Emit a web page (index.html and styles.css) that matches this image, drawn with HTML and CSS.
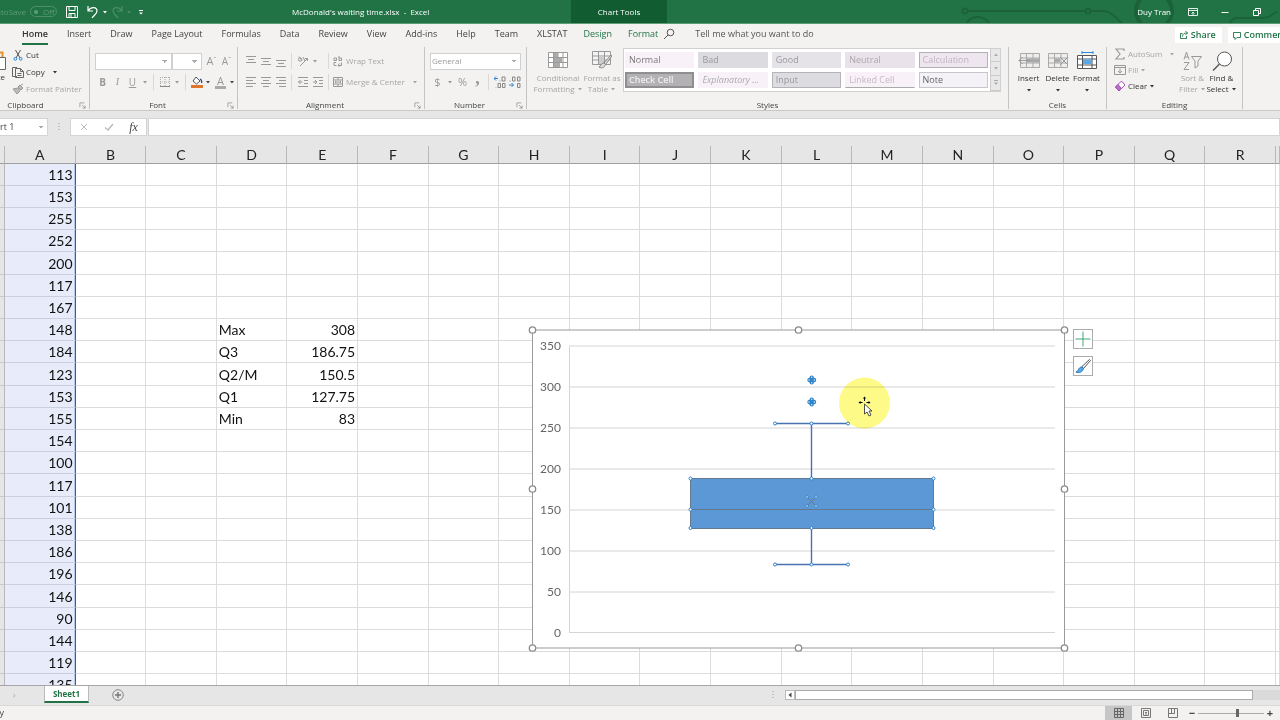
FILE: index.html
```html
<!DOCTYPE html>
<html lang="en">
<head>
<meta charset="utf-8">
<title>McDonald's waiting time.xlsx - Excel</title>
<link rel="stylesheet" href="styles.css">
</head>
<body>
<svg class="defs" aria-hidden="true">
  <symbol id="caret" viewBox="0 0 6 4"><path d="M1 1h4L3 3.4z" fill="currentColor"/></symbol>
  <symbol id="launch" viewBox="0 0 8 8"><path d="M1 6V1h5M3.5 3.5 7 7M7 4v3H4" fill="none" stroke="currentColor" stroke-width=".8"/></symbol>
  <symbol id="al-top" viewBox="0 0 12 12"><path d="M1 1.5h10M3 4.5h6M1 7.500h10" fill="none" stroke="currentColor"/></symbol>
  <symbol id="al-mid" viewBox="0 0 12 12"><path d="M1 3.5h10M3 6.5h6M1 9.5h10" fill="none" stroke="currentColor"/></symbol>
  <symbol id="al-bot" viewBox="0 0 12 12"><path d="M1 5.500h10M3 8.500h6M1 11.500h10" fill="none" stroke="currentColor"/></symbol>
  <symbol id="al-l" viewBox="0 0 12 12"><path d="M1 1.5h10M1 4.5h7M1 7.500h10M1 10.500h7" fill="none" stroke="currentColor"/></symbol>
  <symbol id="al-c" viewBox="0 0 12 12"><path d="M1 1.5h10M3 4.5h6M1 7.500h10M3 10.500h6" fill="none" stroke="currentColor"/></symbol>
  <symbol id="al-r" viewBox="0 0 12 12"><path d="M1 1.5h10M4 4.5h7M1 7.500h10M4 10.500h7" fill="none" stroke="currentColor"/></symbol>
  <symbol id="out" viewBox="0 0 12 12"><path d="M1 1.5h10M7 4.5h4M7 7.500h4M1 10.500h10M5.500 6h-4M3.500 4 1.500 6l2 2" fill="none" stroke="currentColor"/></symbol>
  <symbol id="in" viewBox="0 0 12 12"><path d="M1 1.5h10M7 4.5h4M7 7.500h4M1 10.500h10M1 6h4M3 4l2 2-2 2" fill="none" stroke="currentColor"/></symbol>
</svg>

<header class="titlebar">
  <svg class="circuit" viewBox="0 0 320 23" aria-hidden="true"><g fill="none" stroke="#1b623a" stroke-width="2"><circle cx="5" cy="11" r="2.500"/><path d="M8 11h117"/><circle cx="128" cy="11" r="2.500"/><path d="M131 11h13c8 0 12 8 18 12M7 23c4-8 16-8 22 0"/><circle cx="194" cy="11" r="18" stroke-width="4"/><path d="M270 23c3-6 6-5 12-5h22c8 0 8-6 14-6"/></g></svg>
  <div class="autosave">AutoSave</div>
  <button class="toggle"><span class="knob"></span>Off</button>
  <button class="qa save" aria-label="Save"><svg viewBox="0 0 14 14"><path d="M1.500 1.500h11v11h-11zM4 1.500v4h6v-4M4 12.500v-4h6v4M6 9v3" fill="none" stroke="#fff"/></svg></button>
  <button class="qa" aria-label="Undo"><svg viewBox="0 0 14 14"><path d="M2 1v5h5M2 6c3-5 9-4 9 0 0 3-3 4-5 7" fill="none" stroke="#fff" stroke-width="1.200"/></svg></button>
  <svg class="caret"><use href="#caret"/></svg>
  <button class="qa dim" aria-label="Redo"><svg viewBox="0 0 14 14"><path d="M12 1v5H7M12 6C9 1 3 2 3 6c0 3 3 4 5 7" fill="none" stroke="currentColor" stroke-width="1.200"/></svg></button>
  <svg class="caret dim"><use href="#caret"/></svg>
  <button class="qa" aria-label="Customize toolbar"><svg viewBox="0 0 14 14"><path d="M5 5.500h4" stroke="#fff"/><path d="M5 7.500h4L7 9.500z" fill="#fff"/></svg></button>
  <div class="doc">McDonald's waiting time.xlsx &nbsp;-&nbsp; Excel</div>
  <div class="context">Chart Tools</div>
  <div class="account">
    <span class="user">Duy Tran</span>
    <button class="win" aria-label="Ribbon display"><svg viewBox="0 0 12 12"><path d="M1.500 2.500h9v7h-9zM1.500 4.500h9M6 9V6M4.500 7.500 6 6l1.500 1.500" fill="none" stroke="#e3efe8"/></svg></button>
    <button class="win" aria-label="Minimize"><svg viewBox="0 0 12 12"><path d="M2.500 6.500h7" stroke="#fff"/></svg></button>
    <button class="win" aria-label="Restore"><svg viewBox="0 0 12 12"><path d="M2.500 4.500h5v5h-5zM4.500 4V2.500h5v5H8" fill="none" stroke="#fff"/></svg></button>
  </div>
</header>

<nav class="tabs">
  <button class="tab on">Home</button><button class="tab">Insert</button><button class="tab">Draw</button><button class="tab">Page Layout</button><button class="tab">Formulas</button><button class="tab">Data</button><button class="tab">Review</button><button class="tab">View</button><button class="tab">Add-ins</button><button class="tab">Help</button><button class="tab">Team</button><button class="tab">XLSTAT</button><button class="tab green">Design</button><button class="tab green">Format</button>
  <button class="tab tell"><svg viewBox="0 0 12 12"><circle cx="7.500" cy="4.500" r="3.300" fill="none" stroke="currentColor"/><path d="M5 7 1 11" stroke="currentColor"/></svg>Tell me what you want to do</button>
  <div class="share">
    <button class="white"><svg viewBox="0 0 10 10"><path d="M3.500 3.500H1.500v5h6V6M3.500 6.500c0-3 2-3.500 5-3.500M6.500 1l2 2-2 2" fill="none" stroke="currentColor" stroke-width=".9"/></svg>Share</button>
    <button class="white comments"><svg viewBox="0 0 10 10"><path d="M1.500 2.500h7v5H5l-2 2v-2H1.500z" fill="none" stroke="currentColor" stroke-width=".9"/></svg>Comments</button>
  </div>
</nav>

<main class="ribbon">
  <section class="group clipboard">
    <div class="body">
      <button class="paste"><svg viewBox="0 0 8 20"><path d="M0 1.500h2.500V6" fill="none" stroke="#e8912c" stroke-width="2"/><path d="M-1 6.500h6.500v12H-1z" fill="#fff" stroke="#666"/></svg><span>te</span></button>
      <div class="stack">
        <button class="cmd"><svg viewBox="0 0 12 12"><path d="M3.500 1 8 9M8.500 1 4 9" stroke="#555" fill="none"/><circle cx="3.300" cy="9.800" r="1.400" fill="none" stroke="#2b88d8"/><circle cx="8.700" cy="9.800" r="1.400" fill="none" stroke="#2b88d8"/></svg>Cut</button>
        <button class="cmd"><svg viewBox="0 0 12 12"><path d="M5 10.500H.500v-9H5M3.500 2.500h5l3 3v6h-8zM8.500 2.500v3h3M5.500 7.500h4M5.500 9.500h4" fill="none" stroke="#666"/></svg>Copy<svg class="caret far"><use href="#caret"/></svg></button>
        <button class="cmd off"><svg viewBox="0 0 12 12"><path d="M1 6l5-1 2 3-3 3zM6 4l2-2 3 3-2 2zM9 2l2-1" fill="#bbb" stroke="#999"/></svg>Format Painter</button>
      </div>
    </div>
    <footer>Clipboard<svg class="launch"><use href="#launch"/></svg></footer>
  </section>

  <section class="group font">
    <div class="body col">
      <div class="line"><select class="combo name" aria-label="Font name"><option></option></select><select class="combo size" aria-label="Font size"><option></option></select><button class="ic big">A<sup>ˆ</sup></button><button class="ic mid">A<sup>ˇ</sup></button></div>
      <div class="line">
        <button class="ic mid"><b>B</b></button><button class="ic mid"><i class="serif">I</i></button><button class="ic mid"><u>U</u></button><svg class="caret"><use href="#caret"/></svg><i class="sep"></i>
        <button class="ic" aria-label="Borders"><svg viewBox="0 0 12 12"><path d="M1.500 1v9M6 1v9M10.500 1v9M1 1.500h10M1 6h10" stroke="#aaa" stroke-dasharray="1 1" fill="none"/><path d="M1 10.500h10" stroke="#888"/></svg></button><svg class="caret"><use href="#caret"/></svg><i class="sep"></i>
        <button class="ic" aria-label="Fill color"><svg viewBox="0 0 12 12"><path d="M5 1 9 5 5.500 8 2 5z" fill="#fff" stroke="#555"/><path d="M9 3c2 1 2 2 1.500 4" fill="none" stroke="#2a4f86" stroke-width="1.300"/><path d="M0 9h12v3H0z" fill="#e0762c"/></svg></button><svg class="caret dark"><use href="#caret"/></svg>
        <button class="ic under" aria-label="Font color">A</button><svg class="caret dark"><use href="#caret"/></svg>
      </div>
    </div>
    <footer>Font<svg class="launch"><use href="#launch"/></svg></footer>
  </section>

  <section class="group align">
    <div class="body col">
      <div class="line"><button class="ic"><svg><use href="#al-top"/></svg></button><button class="ic"><svg><use href="#al-mid"/></svg></button><button class="ic"><svg><use href="#al-bot"/></svg></button><i class="sep"></i><button class="ic" aria-label="Orientation"><svg viewBox="0 0 12 12"><circle cx="3" cy="4.500" r="1.700" fill="none" stroke="#999"/><path d="M2 1.500l3 4M6 2l2 4M3 11l7.500-7.500M8 3.500h2.500V6" fill="none" stroke="#999"/></svg></button><svg class="caret"><use href="#caret"/></svg><i class="sep wide"></i><button class="cmd off"><svg viewBox="0 0 12 12"><path d="M2 5V3h2.500v2.500H2zM7 1v4.500h2.500V3H7M4 7.500H2v3h2.500M9.500 7.500v3H6M7.500 8.500 6 10.500l1.500 1" fill="none" stroke="#999"/></svg>Wrap Text</button></div>
      <div class="line"><button class="ic"><svg><use href="#al-l"/></svg></button><button class="ic"><svg><use href="#al-c"/></svg></button><button class="ic"><svg><use href="#al-r"/></svg></button><i class="sep"></i><button class="ic"><svg><use href="#out"/></svg></button><button class="ic"><svg><use href="#in"/></svg></button><i class="sep"></i><button class="cmd off"><svg viewBox="0 0 12 12"><path d="M1.500 1.500h9v9h-9zM1.500 4h9M1.500 8h9M6 1.500V4M6 8v2.500M3 6h6M4 5 3 6l1 1M8 5l1 1-1 1" fill="none" stroke="#999"/></svg>Merge &amp; Center<svg class="caret far"><use href="#caret"/></svg></button></div>
    </div>
    <footer>Alignment<svg class="launch"><use href="#launch"/></svg></footer>
  </section>

  <section class="group number">
    <div class="body col">
      <div class="line"><select class="combo full" aria-label="Number format"><option>General</option></select></div>
      <div class="line"><button class="ic big">$</button><svg class="caret"><use href="#caret"/></svg><button class="ic big">%</button><button class="ic comma">,</button><i class="sep"></i><button class="ic" aria-label="Increase decimal"><svg viewBox="0 0 12 12"><path d="M0 2.500h4M2 .500l-2 2 2 2" fill="none" stroke="#2b88d8"/><path d="M6 4.500v1M8 1h3v4H8zM2 11v.500M4 7.500h2.500v4H4zM8.500 7.500H11v4H8.500z" fill="none" stroke="#888"/></svg></button><button class="ic" aria-label="Decrease decimal"><svg viewBox="0 0 12 12"><path d="M0 9h4.500M2.500 7l2 2-2 2" fill="none" stroke="#2b88d8"/><path d="M1 4.500v1M3.500 1H6v4H3.500zM8.500 1H11v4H8.500zM8.500 7.500H11v4H8.500z" fill="none" stroke="#888"/></svg></button></div>
    </div>
    <footer>Number<svg class="launch"><use href="#launch"/></svg></footer>
  </section>

  <section class="group styles">
    <div class="body">
      <button class="large off cond"><svg viewBox="0 0 20 16"><path d="M.500.500h19v15H.500zM.500 5.500h19M.500 10.500h19M5.500 0v16M15 0v16M10 0v16" fill="#fff" stroke="#999"/><path d="M6 1h4v4H6zM6 6h8v4H6zM6 11h6v4H6z" fill="#aaa"/></svg>Conditional<span>Formatting <svg class="caret"><use href="#caret"/></svg></span></button>
      <button class="large off"><svg viewBox="0 0 20 18"><path d="M.500.500h18v13H.500zM.500 5h18M.500 9h18M6.500 0v14M12.500 0v14" fill="#f4f4f4" stroke="#999"/><path d="M7 5h5v8H7z" fill="#ccc"/><path d="M19 4l-7 8 1.500 1.500L20 5zM12 12c-3 0-3 3-5 4 3 2 6 0 6.500-2.500z" fill="#ddd" stroke="#888"/></svg>Format as<span>Table <svg class="caret"><use href="#caret"/></svg></span></button>
      <div class="gallery">
        <div class="swatches">
          <button class="sw pale">Normal</button><button class="sw g1">Bad</button><button class="sw g2">Good</button><button class="sw g3">Neutral</button><button class="sw calc">Calculation</button>
          <button class="sw check">Check Cell</button><button class="sw pale ital">Explanatory ...</button><button class="sw input">Input</button><button class="sw pale linked">Linked Cell</button><button class="sw note">Note</button>
        </div>
        <div class="scroller"><button aria-label="Up"><svg class="caret flip"><use href="#caret"/></svg></button><button aria-label="Down"><svg class="caret"><use href="#caret"/></svg></button><button aria-label="More"><svg viewBox="0 0 6 6" class="more"><path d="M1 .500h4" stroke="currentColor"/><path d="M1 2.500h4L3 5z" fill="currentColor"/></svg></button></div>
      </div>
    </div>
    <footer>Styles</footer>
  </section>

  <section class="group cells">
    <div class="body">
      <button class="large"><svg viewBox="0 0 22 18"><path d="M2.500 2.500h19v14h-19zM2.500 7h19M2.500 12h19M8.500 2v15M15 2v15" fill="#eee" stroke="#aaa"/><path d="M9 7.500h12v4H9z" fill="#aaa"/><path d="M12 9.500H1M4.500 6 1 9.500 4.500 13" fill="none" stroke="#999"/></svg>Insert<svg class="caret"><use href="#caret"/></svg></button>
      <button class="large"><svg viewBox="0 0 22 18"><path d="M1.500 2.500h19v14h-19zM1.500 7h19M1.500 12h19M7.500 2v15M14 2v15" fill="#eee" stroke="#aaa"/><path d="M7 7.500h6v4H7z" fill="#aaa"/><path d="M13 6l8 8M21 6l-8 8" fill="none" stroke="#999"/></svg>Delete<svg class="caret"><use href="#caret"/></svg></button>
      <button class="large"><svg viewBox="0 0 22 18"><path d="M1.500 4.500h19v13h-19zM1.500 8h19M1.500 14h19M6.500 4v14M16 4v14" fill="#fff" stroke="#555"/><path d="M7 8.500h9V13H7z" fill="#5aa9e6"/><path d="M6 1.500h11M6 0v3M17 0v3" stroke="#2b88d8"/></svg>Format<svg class="caret"><use href="#caret"/></svg></button>
    </div>
    <footer>Cells</footer>
  </section>

  <section class="group editing">
    <div class="body">
      <div class="stack">
        <button class="cmd off"><svg viewBox="0 0 12 12"><path d="M10 3V1H2l4 5-4 5h8V9" fill="none" stroke="#999" stroke-width="1.200"/></svg>AutoSum<svg class="caret far"><use href="#caret"/></svg></button>
        <button class="cmd off"><svg viewBox="0 0 12 12"><path d="M.500 1.500h11v9H.500zM.500 3.500h11M6 4.500V9M4 7l2 2 2-2" fill="none" stroke="#999"/></svg>Fill<svg class="caret"><use href="#caret"/></svg></button>
        <button class="cmd"><svg viewBox="0 0 12 12"><path d="M7.500 1 11 5 5 11 1.500 7z" fill="#fff" stroke="#a34fb5"/><path d="M4 4.500 7.500 8.500 5 11 1.500 7z" fill="#b870c6" stroke="#a34fb5"/></svg>Clear<svg class="caret"><use href="#caret"/></svg></button>
      </div>
      <button class="large off sort"><svg viewBox="0 0 22 20"><path d="M2 8.500 4.500 1 7 8.500M3 6h3M2 11.500h5L2 18.500h5" fill="none" stroke="#999"/><path d="M9.500 5.500h10L16 10v5l-3 2v-7z" fill="none" stroke="#999"/></svg>Sort &amp;<span>Filter <svg class="caret"><use href="#caret"/></svg></span></button>
      <button class="large"><svg viewBox="0 0 22 20"><circle cx="13.500" cy="8" r="7" fill="#fff" stroke="#555"/><path d="M8.500 13 2 19.500" stroke="#555" stroke-width="1.400"/></svg>Find &amp;<span>Select <svg class="caret"><use href="#caret"/></svg></span></button>
    </div>
    <footer>Editing</footer>
  </section>
</main>

<div class="formula">
  <select class="namebox" aria-label="Name box"><option>rt 1</option></select>
  <svg class="dots" viewBox="0 0 4 10"><path d="M2 1v8" stroke="#999" stroke-dasharray="1 2"/></svg>
  <div class="fx"><button aria-label="Cancel"><svg viewBox="0 0 10 10"><path d="M2 2l6 6M8 2 2 8" stroke="#bbb"/></svg></button><button aria-label="Enter"><svg viewBox="0 0 10 10"><path d="M1 5.500 4 8l5-6" fill="none" stroke="#bbb" stroke-width="1.400"/></svg></button><button class="serif"><i>fx</i></button></div>
  <input class="expr" aria-label="Formula">
</div>

<div class="sheet">
  <table class="grid" id="grid"></table>
  <svg class="chart" viewBox="0 0 548 334" role="img" aria-label="Box plot of waiting time">
    <rect x="8.500" y="8" width="532" height="318" fill="#fff" stroke="#999"/>
    <g stroke="#d4d4d4" fill="none"><path d="M45 24h486M45 65h486M45 106h486M45 147h486M45 188h486M45 229h486M45 270h486M45 310.500h486M45.500 24v286"/></g>
    <g class="axis"><text x="37" y="28">350</text><text x="37" y="69">300</text><text x="37" y="110">250</text><text x="37" y="151">200</text><text x="37" y="192">150</text><text x="37" y="233">100</text><text x="37" y="274">50</text><text x="37" y="315">0</text></g>
    <g fill="none" stroke="#4772ad" stroke-width="1.400"><path d="M251 101.500h73M287.500 101v56M287.500 206v37M251 242.500h73"/></g>
    <rect x="166.500" y="156.500" width="243" height="50" fill="#5b98d5" stroke="#66788c"/>
    <path d="M166 187.500h243" stroke="#66788c"/>
    <path d="M284 176l7 7M291 176l-7 7" stroke="#66788c"/>
    <g fill="#fff" stroke="#2f83c8"><circle cx="251" cy="101.500" r="1.500"/><circle cx="287.500" cy="101.500" r="1.500"/><circle cx="324" cy="101.500" r="1.500"/><circle cx="287.500" cy="156.500" r="1.500"/><circle cx="166.500" cy="156.500" r="1.500"/><circle cx="409.500" cy="156.500" r="1.500"/><circle cx="166.500" cy="187.500" r="1.500"/><circle cx="409.500" cy="187.500" r="1.500"/><circle cx="166.500" cy="206" r="1.500"/><circle cx="409.500" cy="206" r="1.500"/><circle cx="287.500" cy="206" r="1.500"/><circle cx="251" cy="242.500" r="1.500"/><circle cx="287.500" cy="242.500" r="1.500"/><circle cx="324" cy="242.500" r="1.500"/><circle cx="283" cy="175" r="1.300"/><circle cx="292" cy="175" r="1.300"/><circle cx="283" cy="184" r="1.300"/><circle cx="292" cy="184" r="1.300"/></g>
    <g fill="#2f83c8"><circle cx="285.500" cy="58" r="2.200"/><circle cx="290" cy="58" r="2.200"/><circle cx="287.700" cy="55.700" r="2.200"/><circle cx="287.700" cy="60.300" r="2.200"/><circle cx="285.500" cy="80" r="2.200"/><circle cx="290" cy="80" r="2.200"/><circle cx="287.700" cy="77.700" r="2.200"/><circle cx="287.700" cy="82.300" r="2.200"/></g>
    <g fill="#cfe6fa"><circle cx="285" cy="58" r=".8"/><circle cx="290.300" cy="58" r=".8"/><circle cx="287.700" cy="55.300" r=".8"/><circle cx="287.700" cy="60.700" r=".8"/><circle cx="285" cy="80" r=".8"/><circle cx="290.300" cy="80" r=".8"/><circle cx="287.700" cy="77.300" r=".8"/><circle cx="287.700" cy="82.700" r=".8"/></g>
    <circle class="spot" cx="340.500" cy="81" r="25.500"/>
    <path d="M335.500 80.500h3M342.500 80.500h3M340.500 76v3" stroke="#000"/><path d="M334.500 80.500l2-1.600v3.200zM346.500 80.500l-2-1.600v3.200zM340.500 74.500l-1.600 2h3.200z"/>
    <path d="M340.500 82v10l2.500-2 2 4 2-1-2-4h3z" fill="#fff" stroke="#222" stroke-width=".8"/>
    <g fill="#fff" stroke="#8a8a8a" stroke-width="1.300"><circle cx="8.500" cy="8" r="3.200"/><circle cx="274.500" cy="8" r="3.200"/><circle cx="540.500" cy="8" r="3.200"/><circle cx="8.500" cy="167" r="3.200"/><circle cx="540.500" cy="167" r="3.200"/><circle cx="8.500" cy="326" r="3.200"/><circle cx="274.500" cy="326" r="3.200"/><circle cx="540.500" cy="326" r="3.200"/></g>
  </svg>
  <div class="chart-tools">
    <button aria-label="Chart elements"><svg viewBox="0 0 18 18"><path d="M9 1.500v15M1.500 9h15" stroke="#3fa878"/></svg></button>
    <button aria-label="Chart styles"><svg viewBox="0 0 18 18"><path d="M15.500 2.500 8 9.500l1.500 2 7-8z" fill="#fff" stroke="#555"/><path d="M8 10c-4 0-3 4-6 5 3 1.500 7 0 7.500-3.500z" fill="#5aa9e6" stroke="#2f78b7"/></svg></button>
  </div>
</div>

<div class="sheetbar">
  <span class="nav">›</span>
  <button class="sheettab">Sheet1</button>
  <button class="add" aria-label="New sheet"><svg viewBox="0 0 12 12"><circle cx="6" cy="6" r="5.300" fill="none" stroke="#8a8a8a"/><path d="M6 3v6M3 6h6" stroke="#777" stroke-width="1.400"/></svg></button>
  <svg class="dots" viewBox="0 0 4 10"><path d="M2 1v8" stroke="#999" stroke-dasharray="1 2"/></svg>
  <div class="hscroll"><button class="arrow" aria-label="Scroll left"><svg viewBox="0 0 8 8"><path d="M5.500 1.500v5L2.500 4z" fill="#444"/></svg></button><div class="thumb"></div></div>
</div>
<footer class="status">
  <span class="ready">y</span>
  <button class="view on" aria-label="Normal"><svg viewBox="0 0 10 10"><path d="M.500.500h9v9h-9zM.500 3.500h9M.500 6.500h9M3.500.500v9M6.500.500v9" fill="none" stroke="#666"/></svg></button>
  <button class="view" aria-label="Page layout"><svg viewBox="0 0 10 10"><path d="M.500.500h9v9h-9zM2.500 2.500h5v5h-5zM4 4.500h2M4 6h2" fill="none" stroke="#777"/></svg></button>
  <button class="view" aria-label="Page break"><svg viewBox="0 0 10 10"><path d="M.500.500h9v9h-9zM3.500.500v5M6.500.500v5M.500 5.500h6" fill="none" stroke="#777"/></svg></button>
  <button class="zoom" aria-label="Zoom out">−</button><input class="slider" type="range" min="0" max="100" value="60" aria-label="Zoom"><button class="zoom" aria-label="Zoom in">+</button>
</footer>
<script src="grid.js"></script>
</body>
</html>
```
FILE: grid.js
```js
const letters = "ABCDEFGHIJKLMNOPQR".split("");
const times = [113, 153, 255, 252, 200, 117, 167, 148, 184, 123, 153, 155, 154, 100, 117, 101, 138, 186, 196, 146, 90, 144, 119, 135];
const summary = { 7: ["Max", "308"], 8: ["Q3", "186.75"], 9: ["Q2/M", "150.5"], 10: ["Q1", "127.75"], 11: ["Min", "83"] };

let html = '<colgroup><col class="edge">' + letters.map(() => "<col>").join("") + '<col class="tail"></colgroup><thead><tr><th class="corner"></th>' +
  letters.map(l => `<th>${l}</th>`).join("") + "<th></th></tr></thead><tbody>";
times.forEach((t, r) => {
  html += '<tr><th></th>' + letters.map((l, c) => {
    if (c === 0) return `<td class="sel num">${t}</td>`;
    if (summary[r] && c === 3) return `<td>${summary[r][0]}</td>`;
    if (summary[r] && c === 4) return `<td class="num">${summary[r][1]}</td>`;
    return "<td></td>";
  }).join("") + "<td></td></tr>";
});
document.getElementById("grid").innerHTML = html + "</tbody>";
```
FILE: styles.css
```css
* { box-sizing: border-box; }
body { margin: 0; height: 100vh; display: flex; flex-direction: column; overflow: hidden; background: #e6e6e6; font-family: "Open Sans", "Noto Sans", sans-serif; font-size: 9px; line-height: 12px; color: #444; }
button, input, select { font: inherit; color: inherit; border: 0; margin: 0; padding: 0; background: none; border-radius: 0; white-space: nowrap; }
select { appearance: none; }
svg { display: block; flex: none; }
.defs { display: none; }
.caret { width: 6px; height: 4px; }
.serif { font-family: "Liberation Serif", serif; }

.titlebar { position: relative; flex: none; height: 24px; display: flex; align-items: center; background: #217346; color: #fff; border-bottom: 1px solid #5d9c79; font-size: 8px; }
.circuit { position: absolute; right: 0; top: 0; width: 320px; height: 23px; }
.autosave { width: 26px; display: flex; justify-content: flex-end; color: #5f9c7a; overflow: hidden; }
.toggle { width: 27px; height: 11px; margin-left: 4px; border: 1px solid #4e8f6c; border-radius: 6px; color: #5f9c7a; line-height: 9px; display: flex; align-items: center; gap: 5px; padding-left: 3px; }
.knob { width: 4px; height: 4px; border-radius: 2px; background: #5f9c7a; }
.qa svg { width: 14px; height: 14px; }
.save { margin: 0 7px 0 8px; }
.qa + .caret { margin: 0 2px; }
.dim { color: #4c8e6a; }
.doc { flex: 1; padding-left: 144px; }
.context { width: 96px; margin-right: 613px; align-self: stretch; display: grid; place-items: center; background: #115c31; }
.doc, .context { white-space: nowrap; }
.account { position: absolute; right: 7px; top: 0; height: 23px; display: flex; align-items: center; }
.user { margin-right: 6px; }
.win { width: 32px; display: grid; place-items: center; }
.win svg { width: 12px; height: 12px; }

.tabs { flex: none; height: 22px; display: flex; align-items: center; gap: 19px; padding-left: 22px; background: #f3f2f1; overflow: hidden; }
.tab { height: 19px; border-bottom: 2px solid transparent; }
.tab.on { font-weight: 600; color: #333; border-color: #217346; }
.tab.green { margin-left: -3px; }
.green { color: #217346; }
.tell { display: flex; align-items: center; gap: 20px; margin-left: -14px; color: #555; }
.tell svg { width: 12px; height: 12px; }
.share { margin-left: auto; margin-right: -17px; display: flex; gap: 6px; font-weight: 600; color: #217346; }
.white { height: 16px; padding: 0 6px 0 4px; background: #fff; display: flex; align-items: center; gap: 2px; }
.white svg { width: 10px; height: 10px; }

.ribbon { flex: none; height: 65px; display: flex; padding-right: 37px; background: #f3f2f1; border-bottom: 1px solid #c8c8c8; font-size: 8px; }
.group { display: flex; flex-direction: column; height: 62px; margin-top: 1px; border-right: 1px solid #c4c4c4; color: #333; }
.body { flex: 1; display: flex; min-height: 0; }
.group footer { position: relative; height: 12px; line-height: 16px; text-align: center; color: #444; }
.launch { position: absolute; right: 3px; top: 5px; width: 7px; height: 7px; color: #888; }
.clipboard { width: 90px; }
.clipboard footer { padding-right: 38px; }
.font { width: 148px; }
.font footer { padding-right: 12px; }
.align { width: 187px; }
.align footer { padding-right: 12px; }
.number { width: 102px; }
.number footer { padding-right: 12px; }
.styles { flex: 1; }
.cells { width: 98px; }
.editing { width: 136px; }

.paste { width: 8px; padding-top: 4px; display: flex; flex-direction: column; align-items: flex-end; overflow: hidden; }
.paste svg { width: 8px; height: 20px; }
.paste span { padding-right: 3px; }
.stack { display: flex; flex-direction: column; gap: 4px; }
.clipboard .stack { padding: 2px 0 0 4px; gap: 5px; }
.cmd { height: 12px; display: flex; align-items: center; gap: 2px; }
.cmd svg { width: 12px; height: 12px; }
.cmd .caret { width: 6px; height: 4px; }
.cmd .far { margin-left: 5px; }
.off { color: #a6a6a6; }

.col { flex-direction: column; gap: 3px; padding: 5px 0 0 5px; }
.line { height: 18px; display: flex; align-items: center; }
.combo, .namebox { background: linear-gradient(45deg, transparent 50%, #aaa 50%) no-repeat right 6px center / 3px 3px, linear-gradient(-45deg, transparent 50%, #aaa 50%) no-repeat right 3px center / 3px 3px, #fff; }
.combo { height: 17px; border: 1px solid #d0d0d0; color: #999; }
.name { width: 77px; }
.size { width: 30px; margin-right: 2px; }
.full { width: 91px; padding-left: 1px; }
.ic { width: 15px; height: 16px; display: grid; place-items: center; color: #999; }
.line .ic:has(sup) { display: block; }
.ic svg { width: 12px; height: 12px; }
.ic sup { font-size: 8px; line-height: 0; vertical-align: 3px; }
.big { font-size: 11px; }
.mid { font-size: 10px; }
.comma { font: 700 18px/8px "Liberation Serif", serif; padding-bottom: 8px; }
.under { font-size: 11px; line-height: 10px; height: 13px; border-bottom: 3px solid #aaa; width: 11px; margin: 0 2px; }
.line > .caret { color: #999; margin: 0 2px; }
.line > .dark { color: #444; margin: 0 2px 0 1px; }
.sep { width: 1px; height: 16px; margin: 0 3px; background: #d8d8d8; }
.sep.wide { margin: 0 3px 0 8px; }

.large { display: flex; flex-direction: column; align-items: center; padding-top: 4px; width: 29px; }
.large > svg { width: 20px; height: 18px; margin-bottom: 3px; }
.large > .caret { width: 6px; height: 4px; margin-top: 4px; }
.large span { display: flex; align-items: center; gap: 2px; line-height: 10px; }
.styles .body { padding-left: 6px; }
.styles .large { width: 38px; }
.styles .cond { width: 50px; }
.gallery { flex: 1; height: 44px; margin: 1px 7px 0 2px; display: flex; border: 1px solid #d0d0d0; background: #fff; font-size: 9px; }
.swatches { flex: 1; display: grid; grid-template-columns: repeat(5, 1fr); gap: 4px; padding: 3px 2px 3px 1px; }
.sw { text-align: left; padding-left: 3px; border: 1px solid transparent; color: #aaa; line-height: 12px; overflow: hidden; }
.pale { background: #f8f2f8; }
.sw.pale:first-child { color: #777; }
.g1 { background: #dcdbe0; color: #999; }
.g2 { background: #e5e3e8; color: #999; }
.g3 { background: #eae2ea; }
.calc { background: #eee6ee; border-color: #b5b0b5; color: #c0b5c0; }
.check { background: #b3b1b4; border: 2px solid #8f8f8f; padding-left: 2px; line-height: 10px; color: #eee; font-weight: 600; }
.ital { font-style: italic; }
.input { background: #dddce0; border-color: #b5b3b8; color: #999; }
.linked { border-bottom-color: #aaa; color: #c5b9c5; }
.note { background: #f4f2f6; border-color: #c8c6ca; color: #666; }
.scroller { width: 10px; display: grid; background: #e8e8e8; border-left: 1px solid #ccc; color: #aaa; }
.scroller button { display: grid; place-items: center; border-bottom: 1px solid #ccc; }
.flip { transform: rotate(180deg); }
.more { width: 6px; height: 6px; }
.cells .body { padding-left: 5px; }
.cells .large > svg:first-child { width: 22px; }
.editing .body { padding-left: 7px; }
.editing .stack { padding-top: 1px; width: 64px; }
.editing .large > svg:first-child { width: 22px; height: 20px; margin-bottom: 1px; }

.formula { flex: none; height: 35px; display: flex; align-items: center; padding-bottom: 3px; }
.namebox { width: 48px; height: 18px; border: 1px solid #d4d4d4; border-left: 0; }
.formula .dots { width: 4px; height: 10px; margin: 0 9px; }
.fx { width: 77px; height: 18px; display: grid; grid-template-columns: repeat(3, 1fr); place-items: center; background: #fff; border: 1px solid #d4d4d4; }
.fx svg { width: 10px; height: 10px; }
.fx .serif { font-size: 12px; }
.expr { flex: 1; min-width: 0; height: 18px; margin-left: 1px; background: #fff; border: 1px solid #d4d4d4; }

.sheet { position: relative; flex: 1; min-height: 0; overflow: hidden; background: #fff; border-bottom: 1px solid #a6a6a6; }
.grid { width: 100%; table-layout: fixed; border-collapse: separate; border-spacing: 0; font-family: Lato, sans-serif; font-size: 14px; line-height: 20px; color: #111; }
.edge { width: 5px; }
.tail { width: 4px; }
.grid th { padding: 0; background: #e6e6e6; border-right: 1px solid #b8b8b8; border-bottom: 1px solid #c8c8c8; font-weight: 400; color: #222; }
.grid thead th { height: 18px; line-height: 17px; border-bottom-color: #a0a0a0; }
.grid td { height: 22px; padding: 1px 2px 0; border-right: 1px solid #dcdcdc; border-bottom: 1px solid #dcdcdc; white-space: nowrap; }
.grid tbody tr:nth-child(5n) td { height: 23px; }
.grid .num { text-align: right; }
.grid .sel { background: #e8ecfa; border-right: 1px solid #1a63c8; border-bottom-color: #cbd0e0; box-shadow: inset -1px 0 #b4cbed; }
.chart { position: absolute; left: 524px; top: 176px; width: 548px; height: 334px; }
.axis { font: 12px Lato, sans-serif; fill: #666; text-anchor: end; }
.spot { fill: #fdfa88; mix-blend-mode: multiply; }
.chart-tools { position: absolute; left: 1073px; top: 183px; display: grid; gap: 7px; }
.chart-tools button { width: 20px; height: 20px; background: #fff; border: 1px solid #ababab; }
.chart-tools svg { width: 18px; height: 18px; }

.sheetbar { flex: none; height: 19px; display: flex; align-items: center; padding-bottom: 1px; }
.nav { width: 44px; padding-left: 13px; color: #aaa; }
.sheettab { width: 45px; height: 17px; align-self: flex-start; background: #fff; border: 1px solid #bbb; border-top: 0; border-bottom: 2px solid #217346; color: #217346; font-size: 8px; font-weight: 700; }
.add { margin-left: 23px; }
.add svg { width: 12px; height: 12px; }
.sheetbar .dots { width: 4px; height: 10px; margin: 0 10px 0 auto; }
.hscroll { width: 495px; height: 10px; display: flex; background: #dadada; }
.arrow { width: 10px; border: 1px solid #bbb; background: #fff; display: grid; place-items: center; }
.arrow svg { width: 8px; height: 8px; }
.thumb { flex: 1; margin-right: 27px; background: #fff; border: 1px solid #ababab; }
.status { flex: none; height: 15px; display: flex; align-items: center; padding-right: 4px; background: #f3f2f1; border-top: 1px solid #d8d8d8; }
.ready { margin-right: auto; width: 4px; display: flex; justify-content: flex-end; }
.view { width: 27px; height: 14px; display: grid; place-items: center; }
.view.on { background: #c6c6c6; }
.view svg { width: 10px; height: 10px; }
.zoom { width: 12px; font-size: 11px; font-weight: 700; }
.slider { appearance: none; width: 66px; height: 10px; background: linear-gradient(#aaa, #aaa) no-repeat center / 100% 1px; }
.slider::-webkit-slider-thumb { appearance: none; width: 3px; height: 8px; background: #666; }
```
